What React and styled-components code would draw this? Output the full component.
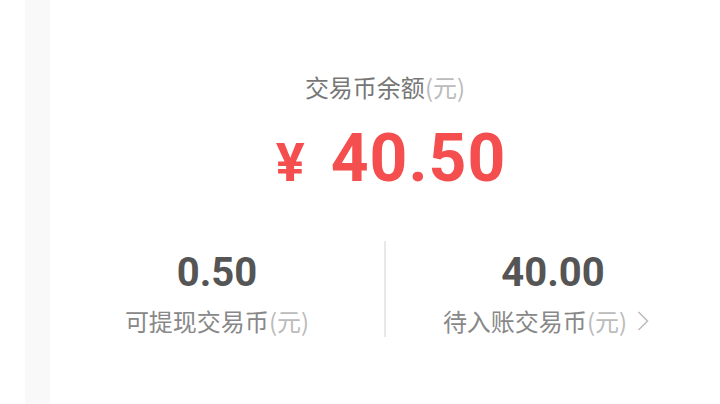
import React from 'react';
import styled, { createGlobalStyle } from 'styled-components';

const GlobalStyle = createGlobalStyle`
  html, body {
    margin: 0;
    padding: 0;
    background: #ffffff;
    font-family: Roboto, "Noto Sans CJK SC", sans-serif;
  }
`;

const Page = styled.div`
  display: flex;
  width: 720px;
  height: 404px;
  background: #ffffff;
`;

const Gutter = styled.div`
  width: 25px;
  flex-shrink: 0;
  background: ${(p) => (p.$shade ? '#f9f9f9' : '#ffffff')};
`;

const Card = styled.div`
  flex: 1;
  display: flex;
  flex-direction: column;
  align-items: center;
  padding-top: 71px;
`;

const Caption = styled.div`
  font-size: 24px;
  line-height: 32px;
  color: #777777;
  font-family: "Noto Sans CJK SC", sans-serif;
`;

const Unit = styled.span`
  color: #bbbbbb;
`;

const Amount = styled.div`
  display: flex;
  align-items: baseline;
  margin-top: 20px;
  margin-left: 12px;
  color: #f44e4e;
  font-weight: 700;
  line-height: 72px;
`;

const Yen = styled.span`
  font-size: 54px;
  margin-right: 26px;
  font-weight: 700;
`;

const Digits = styled.span`
  font-size: 66px;
  letter-spacing: 1px;
`;

const Stats = styled.div`
  display: flex;
  align-self: stretch;
  margin-top: 42px;
  height: 96px;
`;

const Stat = styled.div`
  flex: 1;
  display: flex;
  flex-direction: column;
  align-items: center;
  padding-top: 10px;
`;

const Divider = styled.div`
  width: 2px;
  background: #e8e8e8;
`;

const StatValue = styled.div`
  font-size: 40px;
  line-height: 44px;
  font-weight: 700;
  color: #555555;
`;

const StatLabel = styled.div`
  display: flex;
  align-items: center;
  margin-top: 10px;
  margin-right: ${(p) => (p.$link ? '14px' : '0')};
  font-size: 24px;
  line-height: 32px;
  color: #888888;
  font-family: "Noto Sans CJK SC", sans-serif;
`;

const Chevron = styled.svg`
  width: 12px;
  height: 22px;
  margin-left: 10px;
`;

export default function App() {
  return (
    <>
      <GlobalStyle />
      <Page>
        <Gutter />
        <Gutter $shade />
        <Card>
          <Caption>
            交易币余额<Unit>(元)</Unit>
          </Caption>
          <Amount>
            <Yen>¥</Yen>
            <Digits>40.50</Digits>
          </Amount>
          <Stats>
            <Stat>
              <StatValue>0.50</StatValue>
              <StatLabel>
                可提现交易币<Unit>(元)</Unit>
              </StatLabel>
            </Stat>
            <Divider />
            <Stat>
              <StatValue>40.00</StatValue>
              <StatLabel $link>
                待入账交易币<Unit>(元)</Unit>
                <Chevron viewBox="0 0 12 22">
                  <path d="M1.5 2 L10.5 11 L1.5 20" fill="none" stroke="#bbbbbb" strokeWidth="1.5" />
                </Chevron>
              </StatLabel>
            </Stat>
          </Stats>
        </Card>
      </Page>
    </>
  );
}
